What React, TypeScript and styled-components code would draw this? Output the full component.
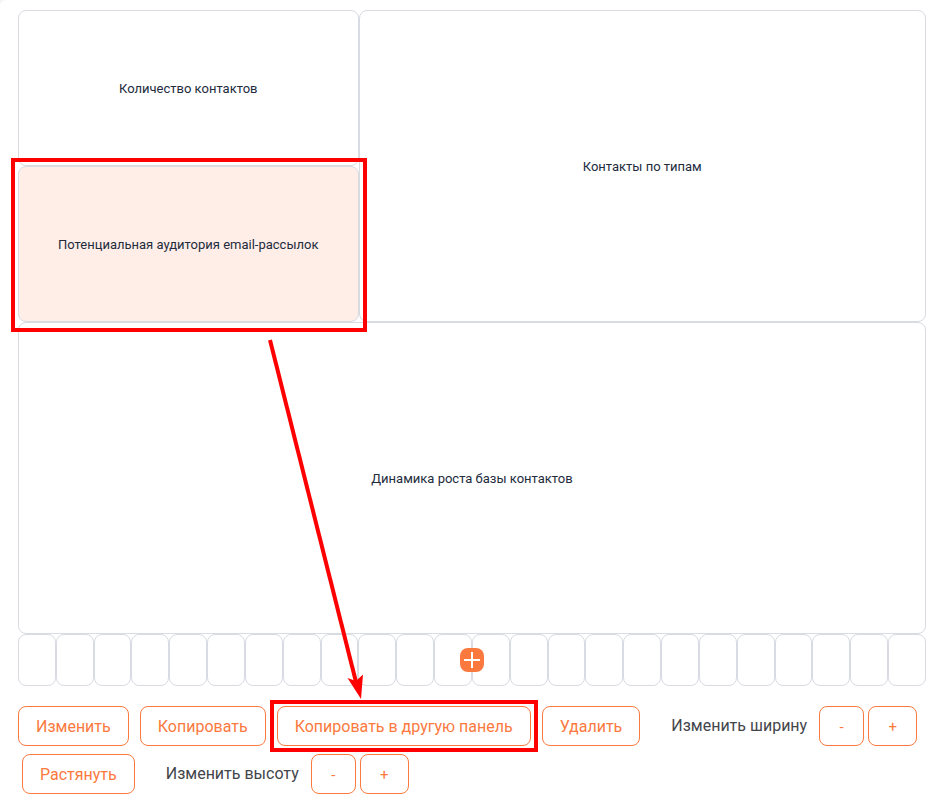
import React from "react";
import styled, { createGlobalStyle, css } from "styled-components";

const GlobalStyle = createGlobalStyle`
  *, *::before, *::after { box-sizing: border-box; }
  body {
    margin: 0;
    background: #f4f4f8;
    font-family: Roboto, "Liberation Sans", sans-serif;
  }
`;

const Panel = styled.main`
  position: relative;
  min-height: 100vh;
  padding: 10px 14px 8px 18px;
  border-top-left-radius: 6px;
  background: #fff;
`;

const Board = styled.section`
  display: grid;
  grid-template-columns: repeat(24, 1fr);
  grid-auto-rows: 52px;
`;

const cellFrame = css`
  border: 1px solid #d9dbe2;
  border-radius: 8px;
`;

const Widget = styled.button<{ $cols: number; $rows: number; $selected?: boolean }>`
  ${cellFrame}
  position: relative;
  grid-column: span ${(p) => p.$cols};
  grid-row: span ${(p) => p.$rows};
  padding: 2px 0 0;
  background: ${(p) => (p.$selected ? "#ffeee8" : "#fff")};
  color: #222b3c;
  font: inherit;
  font-size: 13px;
  line-height: 20px;
  cursor: pointer;
`;

const WidgetFrame = styled.span`
  position: absolute;
  z-index: 1;
  inset: -9px -9px -11px -8px;
  border: 4px solid #f00;
  pointer-events: none;
`;

const EmptyRow = styled.div`
  position: relative;
  grid-column: 1 / -1;
  display: grid;
  grid-template-columns: repeat(24, 1fr);
`;

const EmptyCell = styled.div`
  ${cellFrame}
`;

const AddButton = styled.button`
  position: absolute;
  inset: 0;
  display: flex;
  width: 24px;
  height: 24px;
  margin: auto;
  padding: 0;
  border: 0;
  border-radius: 8px;
  background: #fb793e;
  cursor: pointer;
`;

const Toolbar = styled.div`
  display: flex;
  flex-direction: column;
  gap: 8px;
  margin-top: 20px;
`;

const ToolRow = styled.div<{ $indent?: boolean }>`
  display: flex;
  flex-wrap: wrap;
  gap: 8px 11px;
  padding-left: ${(p) => (p.$indent ? 4 : 0)}px;
`;

const ActionButton = styled.button`
  position: relative;
  height: 40px;
  padding: 2px 17px 0;
  border: 1px solid #fb793e;
  border-radius: 8px;
  background: #fff;
  color: #fb793e;
  font: inherit;
  font-size: 16px;
  line-height: 24px;
  white-space: nowrap;
  cursor: pointer;
`;

const ButtonFrame = styled.span`
  position: absolute;
  inset: -7px -8px;
  border: 4px solid #f00;
  pointer-events: none;
`;

const Stepper = styled.div`
  display: flex;
  align-items: center;
  gap: 4px;
  margin-left: 20px;
`;

const StepperLabel = styled.span`
  margin-right: 8px;
  color: #43454b;
  font-size: 16px;
  line-height: 24px;
`;

const StepButton = styled(ActionButton)<{ $wide?: boolean }>`
  width: ${(p) => (p.$wide ? 49 : 45)}px;
  padding: 2px 0 0;
  font-size: 15px;
`;

const Arrow = styled.svg`
  position: absolute;
  z-index: 2;
  top: 336px;
  left: 260px;
  pointer-events: none;
`;

function SizeStepper({ label }: { label: string }) {
  return (
    <Stepper role="group" aria-label={label}>
      <StepperLabel>{label}</StepperLabel>
      <StepButton type="button">-</StepButton>
      <StepButton type="button" $wide>+</StepButton>
    </Stepper>
  );
}

export default function App() {
  return (
    <>
      <GlobalStyle />
      <Panel>
        <Board>
          <Widget type="button" $cols={9} $rows={3}>Количество контактов</Widget>
          <Widget type="button" $cols={15} $rows={6}>Контакты по типам</Widget>
          <Widget type="button" $cols={9} $rows={3} $selected aria-pressed>
            Потенциальная аудитория email-рассылок
            <WidgetFrame />
          </Widget>
          <Widget type="button" $cols={24} $rows={6}>Динамика роста базы контактов</Widget>
          <EmptyRow>
            {Array.from({ length: 24 }, (_, i) => <EmptyCell key={i} />)}
            <AddButton type="button" aria-label="Добавить">
              <svg width="24" height="24" viewBox="0 0 24 24" stroke="#fff" strokeWidth="2">
                <path d="M12 4v16M4 12h16" />
              </svg>
            </AddButton>
          </EmptyRow>
        </Board>
        <Toolbar>
          <ToolRow>
            <ActionButton type="button">Изменить</ActionButton>
            <ActionButton type="button">Копировать</ActionButton>
            <ActionButton type="button">
              Копировать в другую панель
              <ButtonFrame />
            </ActionButton>
            <ActionButton type="button">Удалить</ActionButton>
            <SizeStepper label="Изменить ширину" />
          </ToolRow>
          <ToolRow $indent>
            <ActionButton type="button">Растянуть</ActionButton>
            <SizeStepper label="Изменить высоту" />
          </ToolRow>
        </Toolbar>
        <Arrow width="120" height="370" viewBox="260 336 120 370" aria-hidden="true">
          <path d="M270 340L356 682" stroke="#f00" strokeWidth="4" fill="none" />
          <path d="M361 699L347.500 678L356 681L363 674.500Z" fill="#f00" />
        </Arrow>
      </Panel>
    </>
  );
}
